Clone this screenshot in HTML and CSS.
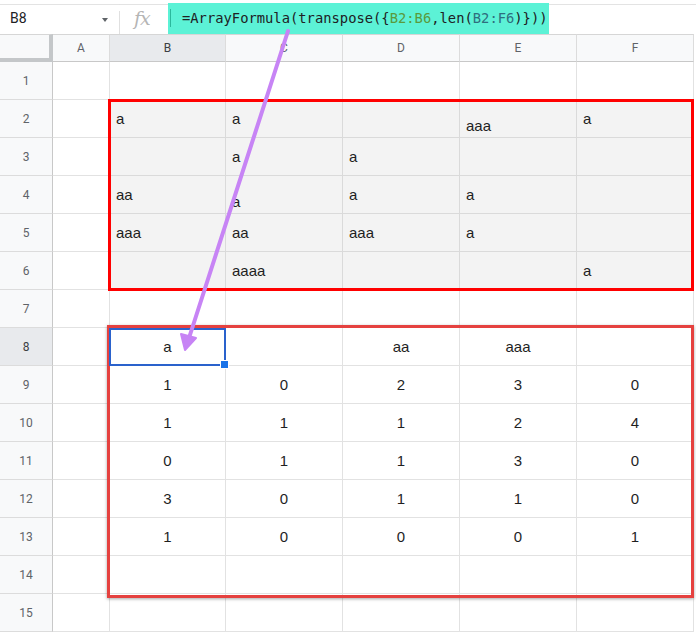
FILE: index.html
```html
<!DOCTYPE html>
<html>
<head>
<meta charset="utf-8">
<link rel="stylesheet" href="styles.css">
</head>
<body>
<div class="app">
  <div class="fbar">
    <div class="namebox"><span class="ref">B8</span><span class="caret"></span></div>
    <div class="fx">fx</div>
    <div class="formula"><span class="cursor"></span><span class="ftext">=ArrayFormula(transpose({<span class="r1">B2:B6</span>,len(<span class="r2">B2:F6</span>)}))</span></div>
    <div class="frest"></div>
  </div>
  <div class="grid">
    <div class="corner"></div><div class="ch">A</div><div class="ch sel">B</div><div class="ch">C</div><div class="ch">D</div><div class="ch">E</div><div class="ch">F</div>

    <div class="rh">1</div><div class="c"></div><div class="c"></div><div class="c"></div><div class="c"></div><div class="c"></div><div class="c"></div>

    <div class="rh">2</div><div class="c"></div><div class="c g">a</div><div class="c g">a</div><div class="c g"></div><div class="c g low">aaa</div><div class="c g">a</div>
    <div class="rh">3</div><div class="c"></div><div class="c g"></div><div class="c g">a</div><div class="c g">a</div><div class="c g"></div><div class="c g"></div>
    <div class="rh">4</div><div class="c"></div><div class="c g">aa</div><div class="c g low">a</div><div class="c g">a</div><div class="c g">a</div><div class="c g"></div>
    <div class="rh">5</div><div class="c"></div><div class="c g">aaa</div><div class="c g">aa</div><div class="c g">aaa</div><div class="c g">a</div><div class="c g"></div>
    <div class="rh">6</div><div class="c"></div><div class="c g"></div><div class="c g">aaaa</div><div class="c g"></div><div class="c g"></div><div class="c g">a</div>

    <div class="rh">7</div><div class="c"></div><div class="c"></div><div class="c"></div><div class="c"></div><div class="c"></div><div class="c"></div>

    <div class="rh sel">8</div><div class="c"></div><div class="c n">a</div><div class="c n"></div><div class="c n">aa</div><div class="c n">aaa</div><div class="c n"></div>
    <div class="rh">9</div><div class="c"></div><div class="c n">1</div><div class="c n">0</div><div class="c n">2</div><div class="c n">3</div><div class="c n">0</div>
    <div class="rh">10</div><div class="c"></div><div class="c n">1</div><div class="c n">1</div><div class="c n">1</div><div class="c n">2</div><div class="c n">4</div>
    <div class="rh">11</div><div class="c"></div><div class="c n">0</div><div class="c n">1</div><div class="c n">1</div><div class="c n">3</div><div class="c n">0</div>
    <div class="rh">12</div><div class="c"></div><div class="c n">3</div><div class="c n">0</div><div class="c n">1</div><div class="c n">1</div><div class="c n">0</div>
    <div class="rh">13</div><div class="c"></div><div class="c n">1</div><div class="c n">0</div><div class="c n">0</div><div class="c n">0</div><div class="c n">1</div>
    <div class="rh">14</div><div class="c"></div><div class="c"></div><div class="c"></div><div class="c"></div><div class="c"></div><div class="c"></div>
    <div class="rh">15</div><div class="c"></div><div class="c"></div><div class="c"></div><div class="c"></div><div class="c"></div><div class="c"></div>
  </div>

  <div class="box box1"></div>
  <div class="box box2"></div>
  <div class="selection"><span class="handle"></span></div>

  <svg class="arrow" width="696" height="634" viewBox="0 0 696 634">
    <line x1="288" y1="31" x2="189" y2="338" stroke="#c784f5" stroke-width="4" stroke-linecap="round"/>
    <polygon points="185,350 196,338 181,334" fill="#c784f5" stroke="#c784f5" stroke-width="2" stroke-linejoin="round"/>
  </svg>
</div>
</body>
</html>
```
FILE: styles.css
```css
html, body {
  margin: 0;
  padding: 0;
  background: #fff;
}

.app {
  position: relative;
  width: 696px;
  height: 634px;
  overflow: hidden;
  font-family: Roboto, "Liberation Sans", Arial, sans-serif;
}

/* formula bar */
.fbar {
  display: flex;
  height: 34px;
  padding-top: 3px;
  box-sizing: border-box;
}

.namebox,
.fx,
.frest {
  border-top: 1px solid #e3e3e3;
  margin-top: 1px;
}

.namebox {
  width: 120px;
  box-sizing: border-box;
  display: flex;
  align-items: center;
  padding-left: 10px;
  padding-bottom: 3px;
  position: relative;
  border-right: 1px solid #e0e0e0;
  background-clip: padding-box;
}

.namebox::after {
  content: "";
  position: absolute;
  right: -1px;
  top: 0;
  width: 1px;
  height: 6px;
  background: #fff;
}

.ref {
  font-size: 14px;
  color: #202124;
}

.caret {
  margin-left: auto;
  margin-right: 11px;
  width: 0;
  height: 0;
  border-left: 3.5px solid transparent;
  border-right: 3.5px solid transparent;
  border-top: 4px solid #5f6368;
  margin-top: 3px;
}

.fx {
  width: 48px;
  box-sizing: border-box;
  padding-left: 14px;
  font-family: "DejaVu Serif", "Liberation Serif", serif;
  font-style: italic;
  font-size: 19px;
  color: #b5b5b5;
  line-height: 26px;
  letter-spacing: -1px;
}

.formula {
  width: 381px;
  background: #5cf2d6;
  display: flex;
  align-items: center;
  padding-bottom: 2px;
  box-sizing: border-box;
}

.cursor {
  width: 1px;
  height: 18px;
  background: #2bb89c;
  margin-left: 2px;
  margin-right: 11px;
}

.ftext {
  font-family: "DejaVu Sans Mono", "Liberation Mono", monospace;
  font-size: 13.8px;
  color: #202124;
  white-space: pre;
}

.r1 { color: #5a9a3c; }
.r2 { color: #2f6e7e; }

.frest {
  flex: 1;
}

/* grid */
.grid {
  display: grid;
  grid-template-columns: 53px 57px 116px 117px 117px 117px 117px;
  grid-template-rows: 28px repeat(15, 38px);
}

.corner {
  background: #f8f9fa;
  border-right: 4px solid #c4c7c9;
  border-bottom: 4px solid #c4c7c9;
  border-top: 1px solid #d6d6d6;
  box-sizing: border-box;
}

.ch {
  background: #f8f9fa;
  border-top: 1px solid #d6d6d6;
  border-right: 1px solid #dcdcdc;
  border-bottom: 1px solid #c8c8c8;
  box-sizing: border-box;
  display: flex;
  align-items: center;
  justify-content: center;
  font-size: 12px;
  color: #5f6368;
}

.rh {
  background: #f8f9fa;
  border-right: 1px solid #c8c8c8;
  border-bottom: 1px solid #dcdcdc;
  box-sizing: border-box;
  display: flex;
  align-items: center;
  justify-content: center;
  font-size: 12px;
  color: #5f6368;
}

.ch.sel,
.rh.sel {
  background: #e8eaed;
  color: #3c4043;
}

.c {
  border-right: 1px solid #e2e2e2;
  border-bottom: 1px solid #e2e2e2;
  box-sizing: border-box;
  display: flex;
  align-items: center;
  padding-left: 6px;
  font-family: "Liberation Sans", Arial, sans-serif;
  font-size: 15px;
  color: #1f1f1f;
}

.c.g {
  background: #f3f3f3;
  border-right-color: #dadada;
  border-bottom-color: #dadada;
}

.c.low {
  padding-top: 14px;
}

.c.n {
  justify-content: center;
  padding-left: 0;
}

/* overlays */
.box {
  position: absolute;
  box-sizing: border-box;
  pointer-events: none;
}

.box1 {
  left: 108px;
  top: 99px;
  width: 586px;
  height: 192px;
  border: 3px solid #ff0000;
}

.box2 {
  left: 107px;
  top: 325px;
  width: 587px;
  height: 273px;
  border: 3px solid #e5413f;
  box-shadow: 0 1px 3px rgba(0, 0, 0, 0.35);
}

.selection {
  position: absolute;
  left: 109px;
  top: 328px;
  width: 117px;
  height: 38px;
  border: 2px solid #2a62cc;
  box-sizing: border-box;
}

.handle {
  position: absolute;
  right: -5px;
  bottom: -5px;
  width: 7px;
  height: 7px;
  background: #1a73e8;
  border: 1px solid #fff;
}

.arrow {
  position: absolute;
  left: 0;
  top: 0;
  pointer-events: none;
}
```
